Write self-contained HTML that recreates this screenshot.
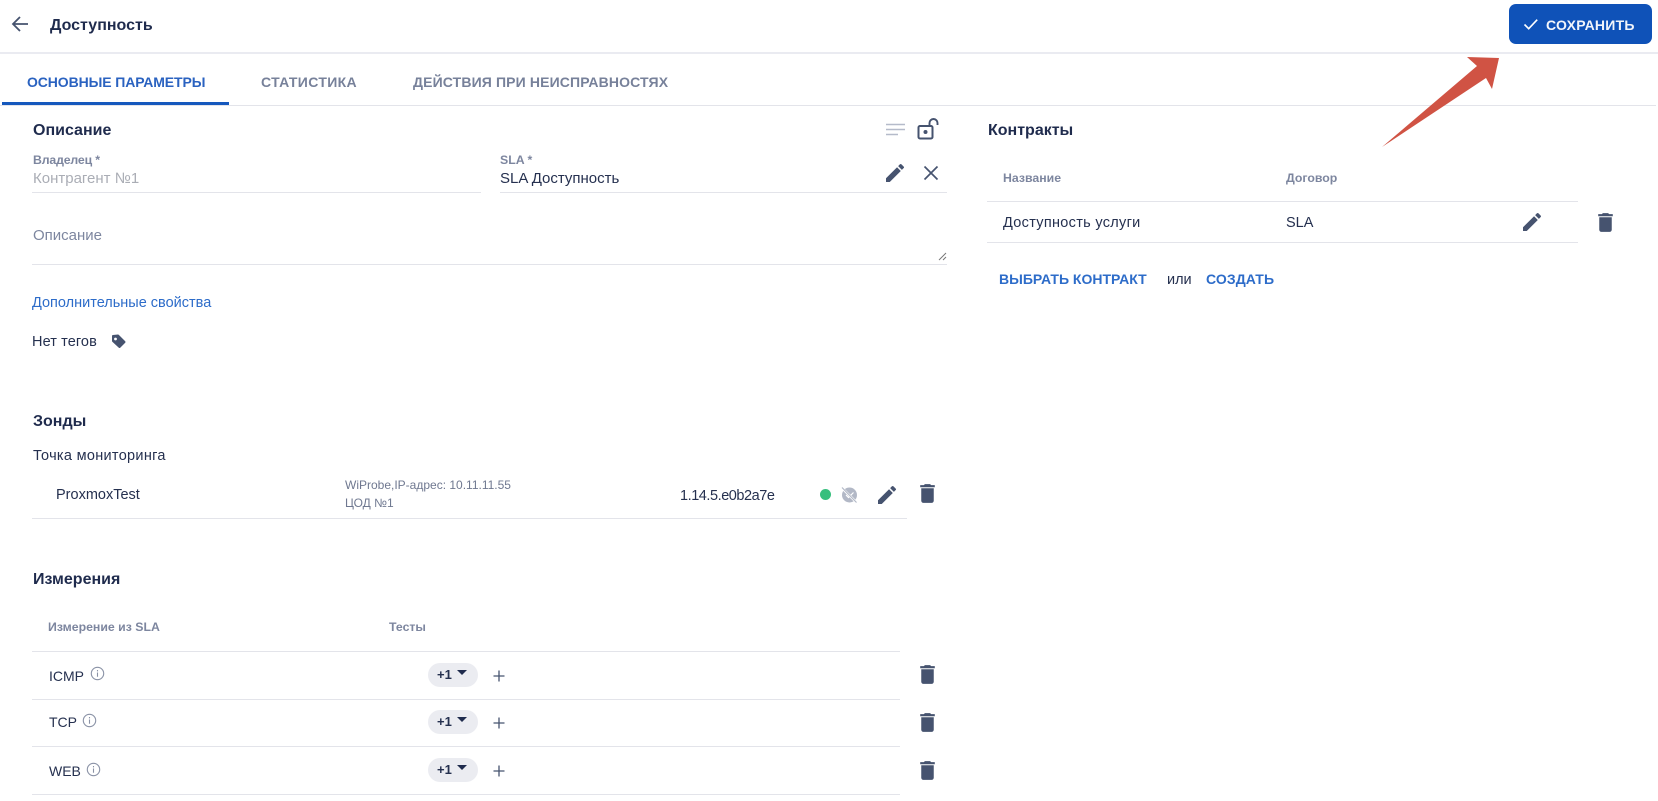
<!DOCTYPE html>
<html lang="ru"><head><meta charset="utf-8"><title>Доступность</title>
<style>
html,body{margin:0;padding:0;background:#fff}
body{width:1658px;height:801px;position:relative;overflow:hidden;font-family:"Liberation Sans","DejaVu Sans",sans-serif;color:#1f2b4d;filter:blur(.3px)}
.t{position:absolute;line-height:20px;white-space:nowrap;font-size:15px;color:#25304f;margin-top:1px}
.h{font-size:16px;font-weight:700;color:#1f2b4d}
.l{position:absolute;height:1px;background:#e3e4ea}
.g{font-size:12.3px;color:#7d869f;font-weight:700}
.s{font-size:14px;font-weight:700;letter-spacing:.25px}
svg{position:absolute}
.chip{position:absolute;left:428px;width:50px;height:24px;border-radius:12px;background:#ebecf1}
.chip b{position:absolute;left:9px;top:2px;font-size:13px;line-height:20px;color:#25304f}
.chip i{position:absolute;left:29px;top:7px;border-left:5px solid transparent;border-right:5px solid transparent;border-top:5px solid #1f2b4d}
</style></head><body>
<svg style="left:10px;top:12px" width="20" height="24" viewBox="0 0 20 24"><path d="M18 12H3M10 5l-7 7 7 7" fill="none" stroke="#46536f" stroke-width="1.8"/></svg>
<div class="t h" style="left:50px;top:15px">Доступность</div>
<div style="position:absolute;left:0;top:52px;width:1658px;height:2px;background:#eaebf1"></div>
<div style="position:absolute;left:1509px;top:4px;width:143px;height:40px;border-radius:7px;background:#0f52b8"></div>
<svg style="left:1522px;top:15px" width="18" height="18" viewBox="0 0 18 18"><path d="M2.5 9.5l4.2 4.2 8.5-9" fill="none" stroke="#fff" stroke-width="1.6"/></svg>
<div class="t s" style="left:1546px;top:14px;color:#f2f5fb">СОХРАНИТЬ</div>

<div class="t s" style="left:27px;top:71px;color:#2a62c0;letter-spacing:-.1px">ОСНОВНЫЕ ПАРАМЕТРЫ</div>
<div class="t s" style="left:261px;top:71px;color:#77819a;letter-spacing:.35px">СТАТИСТИКА</div>
<div class="t s" style="left:413px;top:71px;color:#77819a;letter-spacing:.13px">ДЕЙСТВИЯ ПРИ НЕИСПРАВНОСТЯХ</div>
<div class="l" style="left:0;top:105px;width:1656px"></div>
<div style="position:absolute;left:2px;top:102px;width:227px;height:3px;background:#1558bd"></div>
<svg style="left:1380px;top:55px" width="125" height="95" viewBox="1380 55 125 95"><polygon points="1382,147 1477,66 1467,57 1499,58 1492,89 1486,78" fill="#d05344"/></svg>

<div class="t h" style="left:33px;top:120px">Описание</div>
<svg style="left:885px;top:122px" width="21" height="16" viewBox="0 0 21 16"><path d="M1 2.5h19M1 7.5h19M1 12.5h12" stroke="#b5bbca" stroke-width="1.6"/></svg>
<svg style="left:916px;top:117px" width="24" height="24" viewBox="0 0 24 24"><rect x="2.5" y="9" width="14" height="12.5" rx="1.5" fill="none" stroke="#46536f" stroke-width="2"/><circle cx="9.5" cy="15" r="2" fill="#46536f"/><path d="M13.5 9V6a4 4 0 0 1 8 0V8" fill="none" stroke="#46536f" stroke-width="1.9"/></svg>
<div class="t g" style="left:33px;top:149px;letter-spacing:-.15px">Владелец *</div>
<div class="t" style="left:33px;top:168px;color:#aaadb5">Контрагент №1</div>
<div class="l" style="left:32px;top:192px;width:449px"></div>
<div class="t g" style="left:500px;top:149px">SLA *</div>
<div class="t" style="left:500px;top:168px">SLA Доступность</div>
<div class="l" style="left:500px;top:192px;width:447px"></div>
<svg style="left:883px;top:160.5px" width="24" height="24" viewBox="0 0 24 24"><path d="M3 17.25V21h3.75L17.81 9.94l-3.75-3.75L3 17.25zM20.71 7.04a1 1 0 0 0 0-1.41l-2.34-2.34a1 1 0 0 0-1.41 0l-1.83 1.83 3.75 3.75 1.83-1.83z" fill="#46536f"/></svg>
<svg style="left:923px;top:165px" width="16" height="16" viewBox="0 0 16 16"><path d="M1.5 1.5l13 13M14.5 1.5l-13 13" stroke="#46536f" stroke-width="1.7"/></svg>
<div class="t" style="left:33px;top:225px;color:#7d869f">Описание</div>
<div class="l" style="left:32px;top:264px;width:915px"></div>
<svg style="left:938px;top:252px" width="9" height="9" viewBox="0 0 9 9"><path d="M8 1L1 8M8 5L5 8" stroke="#777" stroke-width="1"/></svg>
<div class="t" style="left:32px;top:292px;color:#2d6cc9;font-size:14.5px">Дополнительные свойства</div>
<div class="t" style="left:32px;top:331px;font-size:14.5px;letter-spacing:.1px">Нет тегов</div>
<svg style="left:110px;top:333px" width="17" height="16" viewBox="0 0 17 16"><path d="M3 3L8 2.5L14.5 9L9.5 14L3 8Z" fill="#46536f" stroke="#46536f" stroke-width="2" stroke-linejoin="round"/><circle cx="5.5" cy="6" r="1.4" fill="#fff"/></svg>

<div class="t h" style="left:33px;top:411px">Зонды</div>
<div class="t" style="left:33px;top:445px;font-size:14.5px;letter-spacing:.3px">Точка мониторинга</div>
<div class="t" style="left:56px;top:484px;font-size:14.5px">ProxmoxTest</div>
<div class="t" style="left:345px;top:474px;font-size:12px;color:#6f7890">WiProbe,IP-адрес: 10.11.11.55</div>
<div class="t" style="left:345px;top:492px;font-size:12px;color:#6f7890">ЦОД №1</div>
<div class="t" style="left:680px;top:485px;font-size:14.5px;letter-spacing:-.45px">1.14.5.e0b2a7e</div>
<div style="position:absolute;left:820px;top:489px;width:11px;height:11px;border-radius:50%;background:#37bf7d"></div>
<svg style="left:840px;top:486px" width="18" height="18" viewBox="0 0 18 18"><circle cx="9.5" cy="9" r="7.5" fill="#b2b8c6"/><path d="M6 9l2.5 2.5 5-5" fill="none" stroke="#fff" stroke-width="1.2"/><path d="M2 2l14 14" stroke="#fff" stroke-width="2.4"/><path d="M2 1.5l14.5 15" stroke="#b2b8c6" stroke-width="1.2"/></svg>
<svg style="left:875px;top:482.5px" width="24" height="24" viewBox="0 0 24 24"><path d="M3 17.25V21h3.75L17.81 9.94l-3.75-3.75L3 17.25zM20.71 7.04a1 1 0 0 0 0-1.41l-2.34-2.34a1 1 0 0 0-1.41 0l-1.83 1.83 3.75 3.75 1.83-1.83z" fill="#46536f"/></svg>
<svg style="left:914.5px;top:480.5px" width="25" height="25" viewBox="0 0 24 24"><path d="M6 19a2 2 0 0 0 2 2h8a2 2 0 0 0 2-2V7H6v12zM19 4h-3.5l-1-1h-5l-1 1H5v2h14V4z" fill="#46536f"/></svg>
<div class="l" style="left:32px;top:518px;width:875px"></div>

<div class="t h" style="left:33px;top:569px">Измерения</div>
<div class="t g" style="left:48px;top:616px">Измерение из SLA</div>
<div class="t g" style="left:389px;top:616px">Тесты</div>
<div class="l" style="left:32px;top:651px;width:868px"></div>

<div class="t" style="left:49px;top:664.5px;font-size:14px">ICMP</div>
<svg style="left:90px;top:666px" width="15" height="15" viewBox="0 0 15 15"><circle cx="7.5" cy="7.5" r="6.2" fill="none" stroke="#8a92a6" stroke-width="1.1"/><path d="M7.5 6.5v4.2M7.5 4v1.4" stroke="#8a92a6" stroke-width="1.1"/></svg>
<div class="chip" style="top:663px"><b>+1</b><i></i></div>
<svg style="left:492px;top:669px" width="14" height="14" viewBox="0 0 14 14"><path d="M7 1.5v11M1.5 7h11" stroke="#46536f" stroke-width="1.3"/></svg>
<svg style="left:914.5px;top:662px" width="25" height="25" viewBox="0 0 24 24"><path d="M6 19a2 2 0 0 0 2 2h8a2 2 0 0 0 2-2V7H6v12zM19 4h-3.5l-1-1h-5l-1 1H5v2h14V4z" fill="#46536f"/></svg>
<div class="l" style="left:32px;top:699px;width:868px"></div>

<div class="t" style="left:49px;top:711px;font-size:14px">TCP</div>
<svg style="left:82px;top:713px" width="15" height="15" viewBox="0 0 15 15"><circle cx="7.5" cy="7.5" r="6.2" fill="none" stroke="#8a92a6" stroke-width="1.1"/><path d="M7.5 6.5v4.2M7.5 4v1.4" stroke="#8a92a6" stroke-width="1.1"/></svg>
<div class="chip" style="top:710px"><b>+1</b><i></i></div>
<svg style="left:492px;top:716px" width="14" height="14" viewBox="0 0 14 14"><path d="M7 1.5v11M1.5 7h11" stroke="#46536f" stroke-width="1.3"/></svg>
<svg style="left:914.5px;top:710px" width="25" height="25" viewBox="0 0 24 24"><path d="M6 19a2 2 0 0 0 2 2h8a2 2 0 0 0 2-2V7H6v12zM19 4h-3.5l-1-1h-5l-1 1H5v2h14V4z" fill="#46536f"/></svg>
<div class="l" style="left:32px;top:746px;width:868px"></div>

<div class="t" style="left:49px;top:759.5px;font-size:14px">WEB</div>
<svg style="left:86px;top:762px" width="15" height="15" viewBox="0 0 15 15"><circle cx="7.5" cy="7.5" r="6.2" fill="none" stroke="#8a92a6" stroke-width="1.1"/><path d="M7.5 6.5v4.2M7.5 4v1.4" stroke="#8a92a6" stroke-width="1.1"/></svg>
<div class="chip" style="top:758px"><b>+1</b><i></i></div>
<svg style="left:492px;top:764px" width="14" height="14" viewBox="0 0 14 14"><path d="M7 1.5v11M1.5 7h11" stroke="#46536f" stroke-width="1.3"/></svg>
<svg style="left:914.5px;top:758px" width="25" height="25" viewBox="0 0 24 24"><path d="M6 19a2 2 0 0 0 2 2h8a2 2 0 0 0 2-2V7H6v12zM19 4h-3.5l-1-1h-5l-1 1H5v2h14V4z" fill="#46536f"/></svg>
<div class="l" style="left:32px;top:794px;width:868px"></div>

<div class="t h" style="left:988px;top:120px">Контракты</div>
<div class="t g" style="left:1003px;top:167px">Название</div>
<div class="t g" style="left:1286px;top:167px">Договор</div>
<div class="l" style="left:987px;top:201px;width:591px"></div>
<div class="t" style="left:1003px;top:212px;font-size:14.5px;letter-spacing:.3px">Доступность услуги</div>
<div class="t" style="left:1286px;top:212px;font-size:14.5px">SLA</div>
<svg style="left:1520px;top:210px" width="24" height="24" viewBox="0 0 24 24"><path d="M3 17.25V21h3.75L17.81 9.94l-3.75-3.75L3 17.25zM20.71 7.04a1 1 0 0 0 0-1.41l-2.34-2.34a1 1 0 0 0-1.41 0l-1.83 1.83 3.75 3.75 1.83-1.83z" fill="#46536f"/></svg>
<svg style="left:1593px;top:209.5px" width="25" height="25" viewBox="0 0 24 24"><path d="M6 19a2 2 0 0 0 2 2h8a2 2 0 0 0 2-2V7H6v12zM19 4h-3.5l-1-1h-5l-1 1H5v2h14V4z" fill="#46536f"/></svg>
<div class="l" style="left:987px;top:242px;width:591px"></div>
<div class="t s" style="left:999px;top:268px;color:#2d6cc9;letter-spacing:0">ВЫБРАТЬ КОНТРАКТ</div>
<div class="t" style="left:1167px;top:269px;font-size:14.5px">или</div>
<div class="t s" style="left:1206px;top:268px;color:#2d6cc9;letter-spacing:.1px">СОЗДАТЬ</div>
</body></html>
